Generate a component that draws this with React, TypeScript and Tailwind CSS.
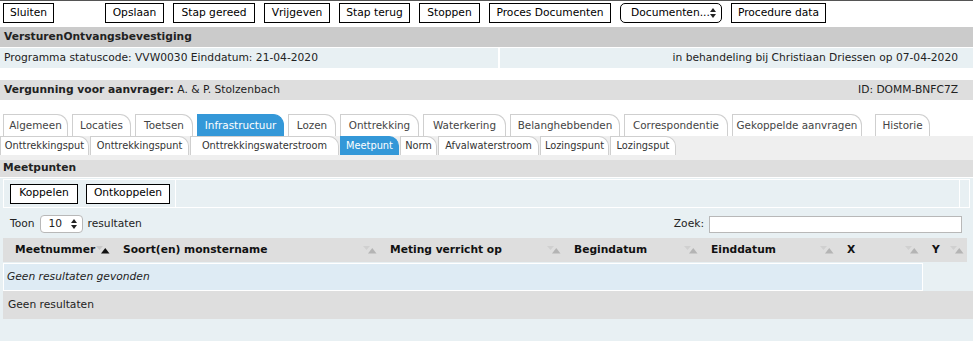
import React from "react";

const topButtons = [
  { label: "Opslaan", w: "w-[59px]" },
  { label: "Stap gereed", w: "w-[82px]" },
  { label: "Vrijgeven", w: "w-[66px]" },
  { label: "Stap terug", w: "w-[71px]" },
  { label: "Stoppen", w: "w-[61px]" },
  { label: "Proces Documenten", w: "w-[122px]" },
];

const mainTabs = [
  { label: "Algemeen", w: "w-[65px]" },
  { label: "Locaties", w: "w-[59px]" },
  { label: "Toetsen", w: "w-[58px]" },
  { label: "Infrastructuur", w: "w-[87px]", active: true },
  { label: "Lozen", w: "w-[48px]" },
  { label: "Onttrekking", w: "w-[79px]" },
  { label: "Waterkering", w: "w-[83px]" },
  { label: "Belanghebbenden", w: "w-[110px]" },
  { label: "Correspondentie", w: "w-[104px]" },
  { label: "Gekoppelde aanvragen", w: "w-[130px]" },
  { label: "Historie", w: "w-[55px] ml-[9px]" },
];

const subTabs = [
  { label: "Onttrekkingsput", w: "w-[89px]" },
  { label: "Onttrekkingspunt", w: "w-[99px]" },
  { label: "Onttrekkingswaterstroom", w: "w-[149px]" },
  { label: "Meetpunt", w: "w-[59px]", active: true },
  { label: "Norm", w: "w-[37px]" },
  { label: "Afvalwaterstroom", w: "w-[101px]" },
  { label: "Lozingspunt", w: "w-[69px]" },
  { label: "Lozingsput", w: "w-[66px]" },
];

const columns = [
  { label: "Meetnummer", w: "w-[108px]", asc: true },
  { label: "Soort(en) monstername", w: "w-[267px]" },
  { label: "Meting verricht op", w: "w-[184px]" },
  { label: "Begindatum", w: "w-[137px]" },
  { label: "Einddatum", w: "w-[136px]" },
  { label: "X", w: "w-[85px]" },
  { label: "Y", w: "w-[45px]" },
];

function SortIcon({ asc }: { asc?: boolean }) {
  return (
    <svg width="14" height="8" viewBox="0 0 14 8" className="shrink-0">
      <polygon points="0,0 7,0 3.5,4" fill={asc ? "#c8c8c8" : "#d0d0d0"} />
      <polygon points="5,7.5 13.5,7.5 9.25,2" fill={asc ? "#111" : "#b4b4b4"} />
    </svg>
  );
}

function UpDown() {
  return (
    <svg width="6" height="10" viewBox="0 0 6 10" className="shrink-0">
      <polygon points="0,4 6,4 3,0" fill="#222" />
      <polygon points="0,6 6,6 3,10" fill="#222" />
    </svg>
  );
}

function Btn({ children, className = "" }: { children: React.ReactNode; className?: string }) {
  return (
    <div className={`h-[20px] flex items-center justify-center border border-black bg-white text-black ${className}`}>
      {children}
    </div>
  );
}

export default function App() {
  return (
    <div className="w-[973px] h-[347px] bg-white font-['DejaVu_Sans',sans-serif] text-[10.7px] text-[#222] overflow-hidden">
      {/* actions */}
      <div className="h-[26px] border-t border-[#555] flex items-start pt-[2px] pl-[3px] gap-[9px]">
        <Btn className="w-[51px]">Sluiten</Btn>
        <div className="ml-[42px] flex gap-[9px]">
          {topButtons.map((b) => (
            <Btn key={b.label} className={b.w}>
              {b.label}
            </Btn>
          ))}
          <div className="h-[20px] w-[102px] pl-[10px] pr-[5px] flex items-center justify-between border border-black rounded-[5px] bg-white text-black">
            <span>Documenten...</span>
            <UpDown />
          </div>
          <Btn className="w-[95px]">Procedure data</Btn>
        </div>
      </div>

      {/* status */}
      <div className="mt-[1px] h-[20px] bg-[#cbcbcb] flex items-center px-[4px] font-bold">
        VersturenOntvangsbevestiging
      </div>
      <div className="h-[21px] bg-[#e8f0f3] flex border-t border-white">
        <div className="w-[500px] flex items-center px-[4px] border-r-2 border-white">
          Programma statuscode: VVW0030 Einddatum: 21-04-2020
        </div>
        <div className="flex-1 flex items-center justify-end pr-[15px]">
          in behandeling bij Christiaan Driessen op 07-04-2020
        </div>
      </div>
      <div className="mt-[12px] h-[20px] bg-[#dedede] flex items-center justify-between pl-[4px] pr-[15px]">
        <div>
          <span className="font-bold">Vergunning voor aanvrager:</span> A. &amp; P. Stolzenbach
        </div>
        <div>ID: DOMM-BNFC7Z</div>
      </div>

      {/* tabs */}
      <div className="mt-[14px] h-[22px] flex items-end gap-[4px] pl-[3px] text-[10.4px]">
        {mainTabs.map((t) => (
          <div
            key={t.label}
            className={`${t.w} h-[22px] flex items-center justify-center rounded-tr-[11px] border-t border-l border-r ${
              t.active ? "bg-[#3498d8] border-[#3498d8] text-white" : "bg-white border-[#cfcfcf] text-[#444]"
            }`}
          >
            {t.label}
          </div>
        ))}
      </div>
      <div className="h-[24px] bg-[#efefef]">
        <div className="h-[19px] flex gap-[1px] text-[9.8px]">
          {subTabs.map((t) => (
            <div
              key={t.label}
              className={`${t.w} h-[19px] flex items-center justify-center rounded-tr-[10px] border-t border-l border-r ${
                t.active ? "bg-[#3498d8] border-[#3498d8] text-white" : "bg-white border-[#cfcfcf] text-[#333]"
              }`}
            >
              {t.label}
            </div>
          ))}
        </div>
      </div>

      {/* meetpunten */}
      <div className="h-[17px] bg-[#dedede] flex items-center px-[3px] font-bold">Meetpunten</div>
      <div className="mt-[1px] h-[163px] bg-[#e8f0f3] pt-[1px]">
        <div className="mx-[3px] h-[29px] flex border border-white">
          <div className="w-[172px] flex items-center gap-[8px] pl-[6px] border-r border-white">
            <Btn className="w-[68px]">Koppelen</Btn>
            <Btn className="w-[84px]">Ontkoppelen</Btn>
          </div>
          <div className="w-[784px] border-r border-white" />
          <div className="flex-1" />
        </div>

        <div className="mt-[7px] h-[18px] flex items-center justify-between pl-[10px] pr-[11px]">
          <div className="flex items-center">
            <span>Toon</span>
            <div className="ml-[5px] w-[43px] h-[18px] flex items-center justify-between pl-[8px] pr-[5px] bg-white border border-[#b8b8b8] rounded-[4px]">
              <span>10</span>
              <UpDown />
            </div>
            <span className="ml-[5px]">resultaten</span>
          </div>
          <div className="flex items-center">
            <span>Zoek:</span>
            <div className="ml-[5px] w-[253px] h-[17px] bg-white border border-[#b8b8b8]" />
          </div>
        </div>

        <div className="mt-[5px] ml-[3px] mr-[6px] h-[24px] bg-[#dedede] flex items-center pl-[2px] font-bold text-[#111]">
          {columns.map((c) => (
            <div key={c.label} className={`${c.w} flex items-center justify-between pl-[10px] pr-[3px]`}>
              <span>{c.label}</span>
              <SortIcon asc={c.asc} />
            </div>
          ))}
        </div>

        <div className="mt-[1px] flex h-[28px]">
          <div className="ml-[3px] w-[920px] bg-[#deebf4] border border-white flex items-center pl-[3px] italic">
            Geen resultaten gevonden
          </div>
          <div className="flex-1" />
        </div>
        <div className="ml-[3px] h-[28px] bg-[#dedede] flex items-center pl-[5px]">Geen resultaten</div>
      </div>
    </div>
  );
}
